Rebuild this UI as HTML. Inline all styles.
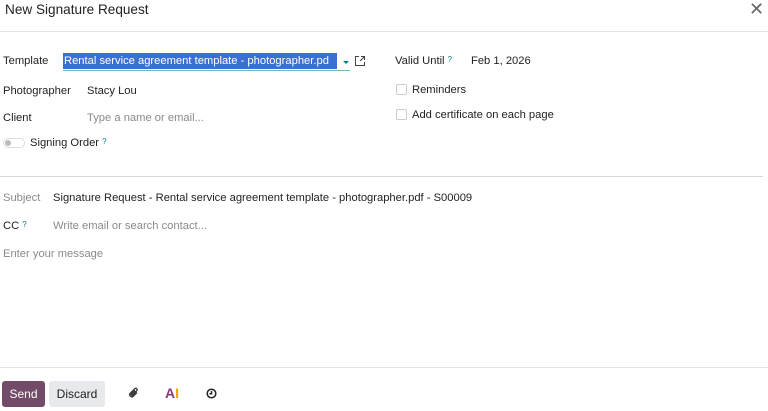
<!DOCTYPE html>
<html><head><style>
body{margin:0;width:768px;height:411px;background:#fff;font-family:"Liberation Sans",sans-serif;font-size:11.2px;color:#222;position:relative;overflow:hidden}
.a{position:absolute;white-space:nowrap}
.g{color:#8a8a8a}
.q{color:#017e84;font-size:8px;vertical-align:top}
.cb{position:absolute;width:9px;height:9px;border:1px solid #ccc;border-radius:2px}
</style></head><body>
<div class="a" style="left:5px;top:2px;font-size:13.6px;color:#222">New Signature Request</div>
<div class="a" style="left:749px;top:-1px;font-size:18px;color:#666">✕</div>
<div style="position:absolute;left:0;top:31px;width:768px;height:1px;background:#e2e2e2"></div>

<div class="a" style="left:3px;top:55px">Template</div>
<div class="a" style="left:63px;top:53px;background:#3b6fd1;color:#fff;padding:0 1px;height:16px;line-height:16px;width:272px">Rental service agreement template - photographer.pd</div>
<div style="position:absolute;left:63px;top:70px;width:287px;height:1px;background:#73b7b9"></div>
<div style="position:absolute;left:343px;top:61px;border-left:3px solid transparent;border-right:3px solid transparent;border-top:3px solid #017e84"></div>
<svg class="a" style="left:354px;top:55px" width="12" height="12" viewBox="0 0 12 12" fill="none" stroke="#444" stroke-width="1"><path d="M5 1.5H1.5V10.5H10.5V7M7 1.5H10.5V5M10.5 1.5L6 6"/></svg>
<div class="a" style="left:3px;top:85px">Photographer</div>
<div class="a" style="left:87px;top:85px">Stacy Lou</div>
<div class="a" style="left:3px;top:112px">Client</div>
<div class="a g" style="left:87px;top:112px">Type a name or email...</div>
<div style="position:absolute;left:3px;top:138px;width:20px;height:8px;border:1px solid #ddd;border-radius:5px"></div>
<div style="position:absolute;left:5px;top:140px;width:6px;height:6px;border-radius:50%;background:#bbb"></div>
<div class="a" style="left:30px;top:137px">Signing Order <span class="q">?</span></div>

<div class="a" style="left:395px;top:55px">Valid Until <span class="q">?</span></div>
<div class="a" style="left:471px;top:55px">Feb 1, 2026</div>
<div class="cb" style="left:396px;top:84px"></div>
<div class="a" style="left:412px;top:84px">Reminders</div>
<div class="cb" style="left:396px;top:109px"></div>
<div class="a" style="left:412px;top:109px">Add certificate on each page</div>

<div style="position:absolute;left:0;top:176px;width:763px;height:1px;background:#d8d8d8"></div>
<div class="a g" style="left:3px;top:192px">Subject</div>
<div class="a" style="left:53px;top:192px">Signature Request - Rental service agreement template - photographer.pdf - S00009</div>
<div class="a" style="left:3px;top:220px">CC <span class="q">?</span></div>
<div class="a g" style="left:53px;top:220px">Write email or search contact...</div>
<div class="a g" style="left:3px;top:248px">Enter your message</div>

<div style="position:absolute;left:0;top:367px;width:768px;height:1px;background:#e2e2e2"></div>
<div class="a" style="left:2px;top:381px;width:43px;height:26px;background:#714b67;color:#fff;border-radius:3px;text-align:center;line-height:26px;font-size:12px">Send</div>
<div class="a" style="left:49px;top:381px;width:56px;height:26px;background:#e7e9ed;color:#222;border-radius:3px;text-align:center;line-height:26px;font-size:12px">Discard</div>
<svg class="a" style="left:128px;top:387px" width="12" height="12" viewBox="0 0 12 12" fill="none" stroke="#333" stroke-width="1.3"><path d="M9 5.5L5 9.5a2.2 2.2 0 0 1-3-3L7 1.5a1.5 1.5 0 0 1 2 2L4.5 8a0.7 0.7 0 0 1-1-1L7 3.5"/></svg>
<div class="a" style="left:165px;top:385px;font-weight:bold;font-size:14px"><span style="color:#8e3a7a">A</span><span style="color:#f0a500">I</span></div>
<svg class="a" style="left:206px;top:388px" width="11" height="11" viewBox="0 0 11 11" fill="none" stroke="#222" stroke-width="1.5"><circle cx="5.5" cy="5.5" r="4.3"/><path d="M5.5 3V5.8H3.5"/></svg>
</body></html>
